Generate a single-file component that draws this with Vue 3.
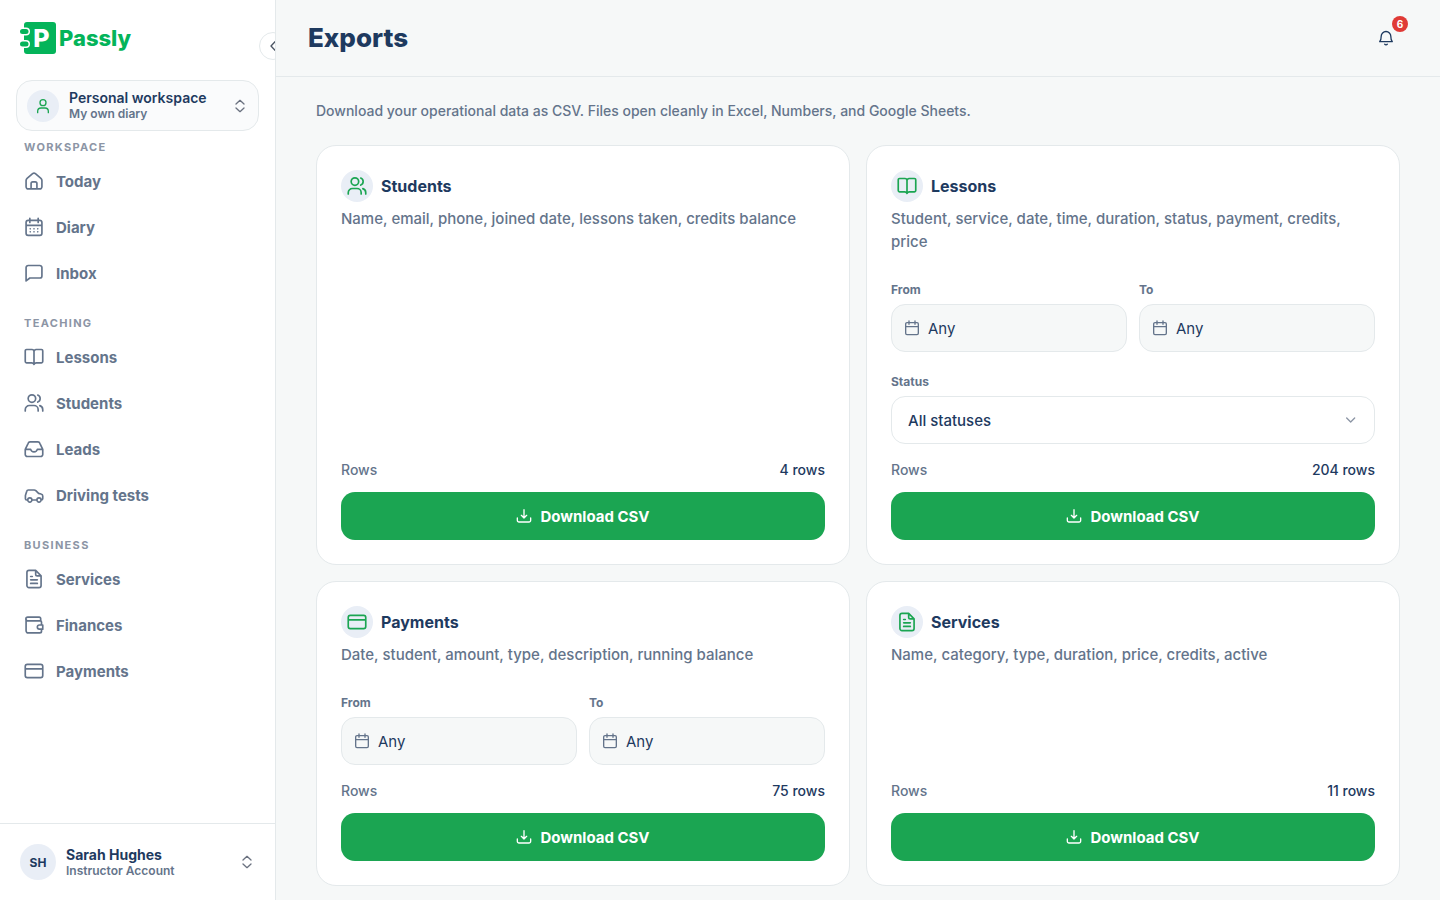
<template>
  <div class="layout">
    <aside class="sidebar">
      <div class="sidebar-top">
        <a href="#" class="logo" aria-label="Passly">
          <svg class="logo-mark" width="36" height="32" viewBox="0 0 36 32">
            <rect x="4" y="0" width="32" height="32" rx="3" fill="#04b45a" />
            <rect x="-1" y="5.500" width="11" height="8" rx="4" fill="#fff" />
            <rect x="-1" y="18" width="11" height="8" rx="4" fill="#fff" />
            <rect x="0" y="7" width="8.500" height="5" rx="2.500" fill="#04b45a" />
            <rect x="0" y="19.500" width="8.500" height="5" rx="2.500" fill="#04b45a" />
            <text x="21.500" y="25" text-anchor="middle" class="logo-letter">P</text>
          </svg>
          <span class="logo-text">Passly</span>
        </a>
        <button class="collapse" type="button" aria-label="Collapse sidebar">
          <svg class="icon" width="16" height="16" viewBox="0 0 24 24"><path d="M15 5.500L9 12l6 6.500" /></svg>
        </button>
      </div>

      <button class="workspace" type="button">
        <span class="workspace-icon">
          <svg class="icon" width="16" height="16" viewBox="0 0 24 24"><path :d="icons.user" /></svg>
        </span>
        <span class="who">
          <span class="workspace-name">Personal workspace</span>
          <span class="who-sub">My own diary</span>
        </span>
        <svg class="icon updown" width="16" height="16" viewBox="0 0 24 24"><path :d="icons.updown" /></svg>
      </button>

      <nav class="nav">
        <section v-for="group in groups" :key="group.title" class="nav-group">
          <h2>{{ group.title }}</h2>
          <a v-for="item in group.items" :key="item.label" href="#" class="nav-item">
            <svg class="icon" width="20" height="20" viewBox="0 0 24 24"><path :d="icons[item.icon]" /></svg>
            {{ item.label }}
          </a>
        </section>
      </nav>

      <button class="account" type="button">
        <span class="avatar">SH</span>
        <span class="who">
          <span class="account-name">Sarah Hughes</span>
          <span class="who-sub">Instructor Account</span>
        </span>
        <svg class="icon updown" width="16" height="16" viewBox="0 0 24 24"><path :d="icons.updown" /></svg>
      </button>
    </aside>

    <main class="main">
      <header class="header">
        <h1>Exports</h1>
        <button class="bell" type="button" aria-label="Notifications">
          <svg class="icon" width="16" height="16" viewBox="0 0 24 24"><path :d="icons.bell" /></svg>
          <span class="badge">6</span>
        </button>
      </header>

      <div class="content">
        <p class="intro">Download your operational data as CSV. Files open cleanly in Excel, Numbers, and Google Sheets.</p>

        <div class="cards">
          <article v-for="card in cards" :key="card.id" class="card">
            <div class="card-head">
              <span class="card-icon">
                <svg class="icon" width="20" height="20" viewBox="0 0 24 24"><path :d="icons[card.icon]" /></svg>
              </span>
              <h3>{{ card.title }}</h3>
            </div>
            <p class="card-text">{{ card.text }}</p>

            <div class="card-bottom">
              <div v-if="card.dates" class="dates">
                <div v-for="side in ['From', 'To']" :key="side" class="field">
                  <label :for="card.id + side">{{ side }}</label>
                  <button :id="card.id + side" type="button" class="date">
                    <svg class="icon" width="16" height="16" viewBox="0 0 24 24"><path :d="icons.date" /></svg>
                    Any
                  </button>
                </div>
              </div>

              <div v-if="card.status" class="field">
                <label :for="card.id + 'Status'">Status</label>
                <div class="select">
                  <select :id="card.id + 'Status'" v-model="status">
                    <option value="all">All statuses</option>
                    <option value="completed">Completed</option>
                    <option value="cancelled">Cancelled</option>
                  </select>
                  <svg class="icon" width="16" height="16" viewBox="0 0 24 24"><path d="M5.500 9l6 6 6-6" /></svg>
                </div>
              </div>

              <div>
                <div class="rows">
                  <span>Rows</span>
                  <span class="rows-count">{{ card.rows }} rows</span>
                </div>
                <button class="download" type="button">
                  <svg class="icon" width="16" height="16" viewBox="0 0 24 24"><path :d="icons.download" /></svg>
                  Download CSV
                </button>
              </div>
            </div>
          </article>
        </div>
      </div>
    </main>
  </div>
</template>

<script setup>
import { ref } from 'vue'

const status = ref('all')

const icons = {
  home: 'M2.500 11.300c0-1 .5-1.900 1.200-2.500l6.600-5.600a2.700 2.700 0 0 1 3.400 0l6.600 5.600c.7.600 1.200 1.500 1.200 2.500V19a2.500 2.500 0 0 1-2.500 2.500H5A2.500 2.500 0 0 1 2.500 19zM8.500 21.500V15a2 2 0 0 1 2-2h3a2 2 0 0 1 2 2v6.500',
  calendar: 'M5 4h14a2.500 2.500 0 0 1 2.500 2.500v13A2.500 2.500 0 0 1 19 22H5a2.500 2.500 0 0 1-2.500-2.500v-13A2.500 2.500 0 0 1 5 4zM2.500 10h19M7 1.500v5M17 1.500v5M7.500 14.200h.01M12 14.200h.01M16.500 14.200h.01M7.500 17.800h.01M12 17.800h.01M16.500 17.800h.01',
  chat: 'M2.500 21.500v-16A2.500 2.500 0 0 1 5 3h14a2.500 2.500 0 0 1 2.500 2.500v10A2.500 2.500 0 0 1 19 18H7z',
  book: 'M12 5.500v15.500M12 5.500a2.500 2.500 0 0 0-2.500-2.500H3a1.500 1.500 0 0 0-1.500 1.500v13A1.500 1.500 0 0 0 3 19h6a3 3 0 0 1 3 2 3 3 0 0 1 3-2h6a1.500 1.500 0 0 0 1.500-1.500v-13A1.500 1.500 0 0 0 21 3h-6.500A2.500 2.500 0 0 0 12 5.500z',
  users: 'M14 6.700a4.500 4.500 0 1 1-9 0 4.500 4.500 0 0 1 9 0zM1.500 21.500V20a5 5 0 0 1 5-5h5.500a5 5 0 0 1 5 5v1.500M16.500 2.500a4.500 4.500 0 0 1 0 8.400M19 15.200a5 5 0 0 1 3.500 4.800v1.500',
  inbox: 'M1.500 12.500L5 5.200A2.500 2.500 0 0 1 7.300 3.500h9.400A2.500 2.500 0 0 1 19 5.200l3.500 7.300V18.500a2.500 2.500 0 0 1-2.500 2.500H4a2.500 2.500 0 0 1-2.500-2.500zM1.500 12.500H8c.5 2 2 3 4 3s3.500-1 4-3h6.500',
  car: 'M4.500 18H3.200a1.500 1.500 0 0 1-1.500-1.500v-4L3.300 7.500A2 2 0 0 1 5.200 6h7a3 3 0 0 1 2 .800L17.500 10l3 .800a2.500 2.500 0 0 1 2 2.500v3A1.700 1.700 0 0 1 20.800 18h-.3M9.500 18h6M9.500 18a2.500 2.500 0 1 1-5 0 2.500 2.500 0 0 1 5 0zM20.500 18a2.500 2.500 0 1 1-5 0 2.500 2.500 0 0 1 5 0z',
  file: 'M14 1.700H6A2.500 2.500 0 0 0 3.500 4.200v15.600A2.500 2.500 0 0 0 6 22.300h12a2.500 2.500 0 0 0 2.500-2.500V8.200zM14 1.700v4.500a2 2 0 0 0 2 2h4.500M8 9h2M8 13h8M8 17.300h8',
  wallet: 'M20 7V4.200A1.700 1.700 0 0 0 18.300 2.500H4.500a2 2 0 0 0 0 4.500H19.500A1.500 1.500 0 0 1 21 8.500V12M2.500 4.700V19A2.500 2.500 0 0 0 5 21.500h14a2 2 0 0 0 2-2V17M22.500 12h-4a2.500 2.500 0 0 0 0 5h4z',
  card: 'M4 4h16a2.500 2.500 0 0 1 2.500 2.500v11A2.500 2.500 0 0 1 20 20H4a2.500 2.500 0 0 1-2.500-2.500v-11A2.500 2.500 0 0 1 4 4zM1.500 9.500h21',
  date: 'M4.500 4h15a2 2 0 0 1 2 2v14a2 2 0 0 1-2 2h-15a2 2 0 0 1-2-2V6a2 2 0 0 1 2-2zM2.500 10h19M7.500 1.500v5M16.500 1.500v5',
  user: 'M16.500 7a4.500 4.500 0 1 1-9 0 4.500 4.500 0 0 1 9 0zM4 22v-2a5 5 0 0 1 5-5h6a5 5 0 0 1 5 5v2',
  updown: 'M6 9l6-5.500L18 9M6 15l6 5.500 6-5.500',
  bell: 'M2.500 17.500c1.700-1.500 2.300-3.500 2.300-8a7.200 7.200 0 0 1 14.400 0c0 4.500.6 6.500 2.300 8zM10 21.300a2.500 2.500 0 0 0 4 0',
  download: 'M12 2.500v12.500M8 11l4 4 4-4M2 15v3.500A2.500 2.500 0 0 0 4.500 21h15a2.500 2.500 0 0 0 2.500-2.500V15'
}

const groups = [
  {
    title: 'Workspace',
    items: [
      { label: 'Today', icon: 'home' },
      { label: 'Diary', icon: 'calendar' },
      { label: 'Inbox', icon: 'chat' }
    ]
  },
  {
    title: 'Teaching',
    items: [
      { label: 'Lessons', icon: 'book' },
      { label: 'Students', icon: 'users' },
      { label: 'Leads', icon: 'inbox' },
      { label: 'Driving tests', icon: 'car' }
    ]
  },
  {
    title: 'Business',
    items: [
      { label: 'Services', icon: 'file' },
      { label: 'Finances', icon: 'wallet' },
      { label: 'Payments', icon: 'card' }
    ]
  }
]

const cards = [
  { id: 'students', title: 'Students', icon: 'users', text: 'Name, email, phone, joined date, lessons taken, credits balance', rows: 4 },
  { id: 'lessons', title: 'Lessons', icon: 'book', text: 'Student, service, date, time, duration, status, payment, credits, price', rows: 204, dates: true, status: true },
  { id: 'payments', title: 'Payments', icon: 'card', text: 'Date, student, amount, type, description, running balance', rows: 75, dates: true },
  { id: 'services', title: 'Services', icon: 'file', text: 'Name, category, type, duration, price, credits, active', rows: 11 }
]
</script>

<style>
body {
  margin: 0;
  background: #f6f8f8;
}
</style>

<style scoped>
.layout {
  display: flex;
  min-height: 100vh;
  font-family: Inter, "Liberation Sans", sans-serif;
  color: #1e3a5f;
}

.layout * {
  box-sizing: border-box;
}

h1, h2, h3, p {
  margin: 0;
}

button, select {
  font-family: inherit;
  color: inherit;
  cursor: pointer;
}

.icon {
  flex: none;
  fill: none;
  stroke: currentColor;
  stroke-width: 2;
  stroke-linecap: round;
  stroke-linejoin: round;
}

/* Sidebar */
.sidebar {
  position: sticky;
  top: 0;
  flex: none;
  display: flex;
  flex-direction: column;
  width: 276px;
  height: 100vh;
  overflow: hidden;
  background: #fff;
  border-right: 1px solid #e4e9eb;
}

.sidebar-top {
  position: relative;
  flex: none;
  height: 80px;
  padding: 22px 20px 0;
}

.logo {
  display: inline-flex;
  align-items: center;
  gap: 3px;
  height: 32px;
  color: #04b45a;
  text-decoration: none;
}

.logo-letter {
  fill: #fff;
  font-size: 25px;
  font-weight: 800;
}

.logo-text {
  font-size: 22px;
  font-weight: 800;
  line-height: 32px;
}

.collapse {
  position: absolute;
  top: 32px;
  right: -12px;
  display: flex;
  align-items: center;
  justify-content: center;
  width: 28px;
  height: 28px;
  padding: 0;
  border: 1px solid #e4e9eb;
  border-radius: 50%;
  background: #fff;
  color: #4b5563;
}

.workspace {
  display: flex;
  align-items: center;
  gap: 10px;
  margin: 0 16px 8px;
  padding: 8px 10px;
  border: 1px solid #e4e9eb;
  border-radius: 16px;
  background: #fafbfc;
  text-align: left;
}

.workspace-icon {
  display: flex;
  align-items: center;
  justify-content: center;
  width: 32px;
  height: 32px;
  border-radius: 50%;
  background: #e9eef6;
  color: #1ba552;
}

.who {
  flex: 1;
  display: flex;
  flex-direction: column;
}

.workspace-name,
.account-name {
  font-size: 14px;
  line-height: 17px;
  font-weight: 600;
}

.account-name {
  font-weight: 700;
}

.who-sub {
  font-size: 12px;
  line-height: 16px;
  font-weight: 600;
  color: #64748b;
}

.updown {
  color: #6b7280;
}

.nav {
  flex: 1;
  display: flex;
  flex-direction: column;
  gap: 20px;
}

.nav-group {
  display: flex;
  flex-direction: column;
  gap: 2px;
}

.nav-group h2 {
  padding: 0 24px 2px;
  font-size: 11px;
  line-height: 16px;
  font-weight: 700;
  letter-spacing: 0.12em;
  text-transform: uppercase;
  color: #8c95a5;
}

.nav-item {
  display: flex;
  align-items: center;
  gap: 12px;
  height: 44px;
  padding: 0 24px;
  font-size: 15px;
  font-weight: 700;
  color: #64748b;
  text-decoration: none;
}

.account {
  display: flex;
  align-items: center;
  gap: 10px;
  padding: 20px;
  border: none;
  border-top: 1px solid #e4e9eb;
  background: #fff;
  text-align: left;
}

.avatar {
  display: flex;
  align-items: center;
  justify-content: center;
  width: 36px;
  height: 36px;
  border-radius: 50%;
  background: #e9eef6;
  font-size: 12px;
  font-weight: 700;
}

/* Main */
.main {
  flex: 1;
  min-width: 0;
}

.header {
  display: flex;
  align-items: center;
  justify-content: space-between;
  padding: 16px 32px;
  border-bottom: 1px solid #e4e9eb;
}

.header h1 {
  font-size: 26px;
  line-height: 44px;
  font-weight: 800;
}

.bell {
  position: relative;
  display: flex;
  align-items: center;
  justify-content: center;
  width: 44px;
  height: 44px;
  padding: 0;
  border: none;
  background: none;
}

.badge {
  position: absolute;
  top: 0;
  right: 0;
  width: 16px;
  height: 16px;
  border-radius: 50%;
  background: #e03a36;
  color: #fff;
  font-size: 10px;
  line-height: 16px;
  font-weight: 700;
}

.content {
  padding: 24px 40px 12px;
}

.intro {
  margin-bottom: 24px;
  font-size: 14px;
  line-height: 20px;
  font-weight: 500;
  color: #64748b;
}

.cards {
  display: grid;
  grid-template-columns: repeat(2, minmax(0, 1fr));
  gap: 16px;
}

.card {
  display: flex;
  flex-direction: column;
  padding: 24px;
  border: 1px solid #e4e9eb;
  border-radius: 20px;
  background: #fff;
}

.card-head {
  display: flex;
  align-items: center;
  gap: 8px;
}

.card-icon {
  display: flex;
  align-items: center;
  justify-content: center;
  width: 32px;
  height: 32px;
  border-radius: 50%;
  background: #e9eef6;
  color: #1ba552;
}

.card h3 {
  font-size: 16px;
  line-height: 24px;
  font-weight: 700;
}

.card-text {
  margin-top: 5px;
  font-size: 15px;
  line-height: 23px;
  font-weight: 500;
  color: #64748b;
}

.card-bottom {
  display: flex;
  flex-direction: column;
  gap: 21px;
  margin-top: auto;
  padding-top: 28px;
}

.dates {
  display: grid;
  grid-template-columns: 1fr 1fr;
  gap: 12px;
}

.field {
  display: flex;
  flex-direction: column;
  gap: 5px;
}

.field label {
  font-size: 12px;
  line-height: 18px;
  font-weight: 700;
  color: #64748b;
}

.date {
  display: flex;
  align-items: center;
  gap: 8px;
  height: 48px;
  padding: 0 12px;
  border: 1px solid #e4e9eb;
  border-radius: 14px;
  background: #f6f8f8;
  font-size: 15px;
}

.date .icon {
  color: #64748b;
}

.select {
  position: relative;
  display: flex;
  align-items: center;
}

.select select {
  width: 100%;
  height: 48px;
  padding: 0 40px 0 16px;
  border: 1px solid #e4e9eb;
  border-radius: 14px;
  background: #fff;
  appearance: none;
  font-size: 15px;
  font-weight: 500;
}

.select .icon {
  position: absolute;
  right: 16px;
  color: #8c95a5;
  pointer-events: none;
}

.rows {
  display: flex;
  justify-content: space-between;
  margin: -5px 0 12px;
  font-size: 14px;
  line-height: 20px;
  font-weight: 500;
  color: #64748b;
}

.rows-count {
  color: #1e3a5f;
}

.download {
  display: flex;
  align-items: center;
  justify-content: center;
  gap: 8px;
  width: 100%;
  height: 48px;
  border: none;
  border-radius: 14px;
  background: #1ba552;
  color: #fff;
  font-size: 15px;
  font-weight: 700;
}
</style>
